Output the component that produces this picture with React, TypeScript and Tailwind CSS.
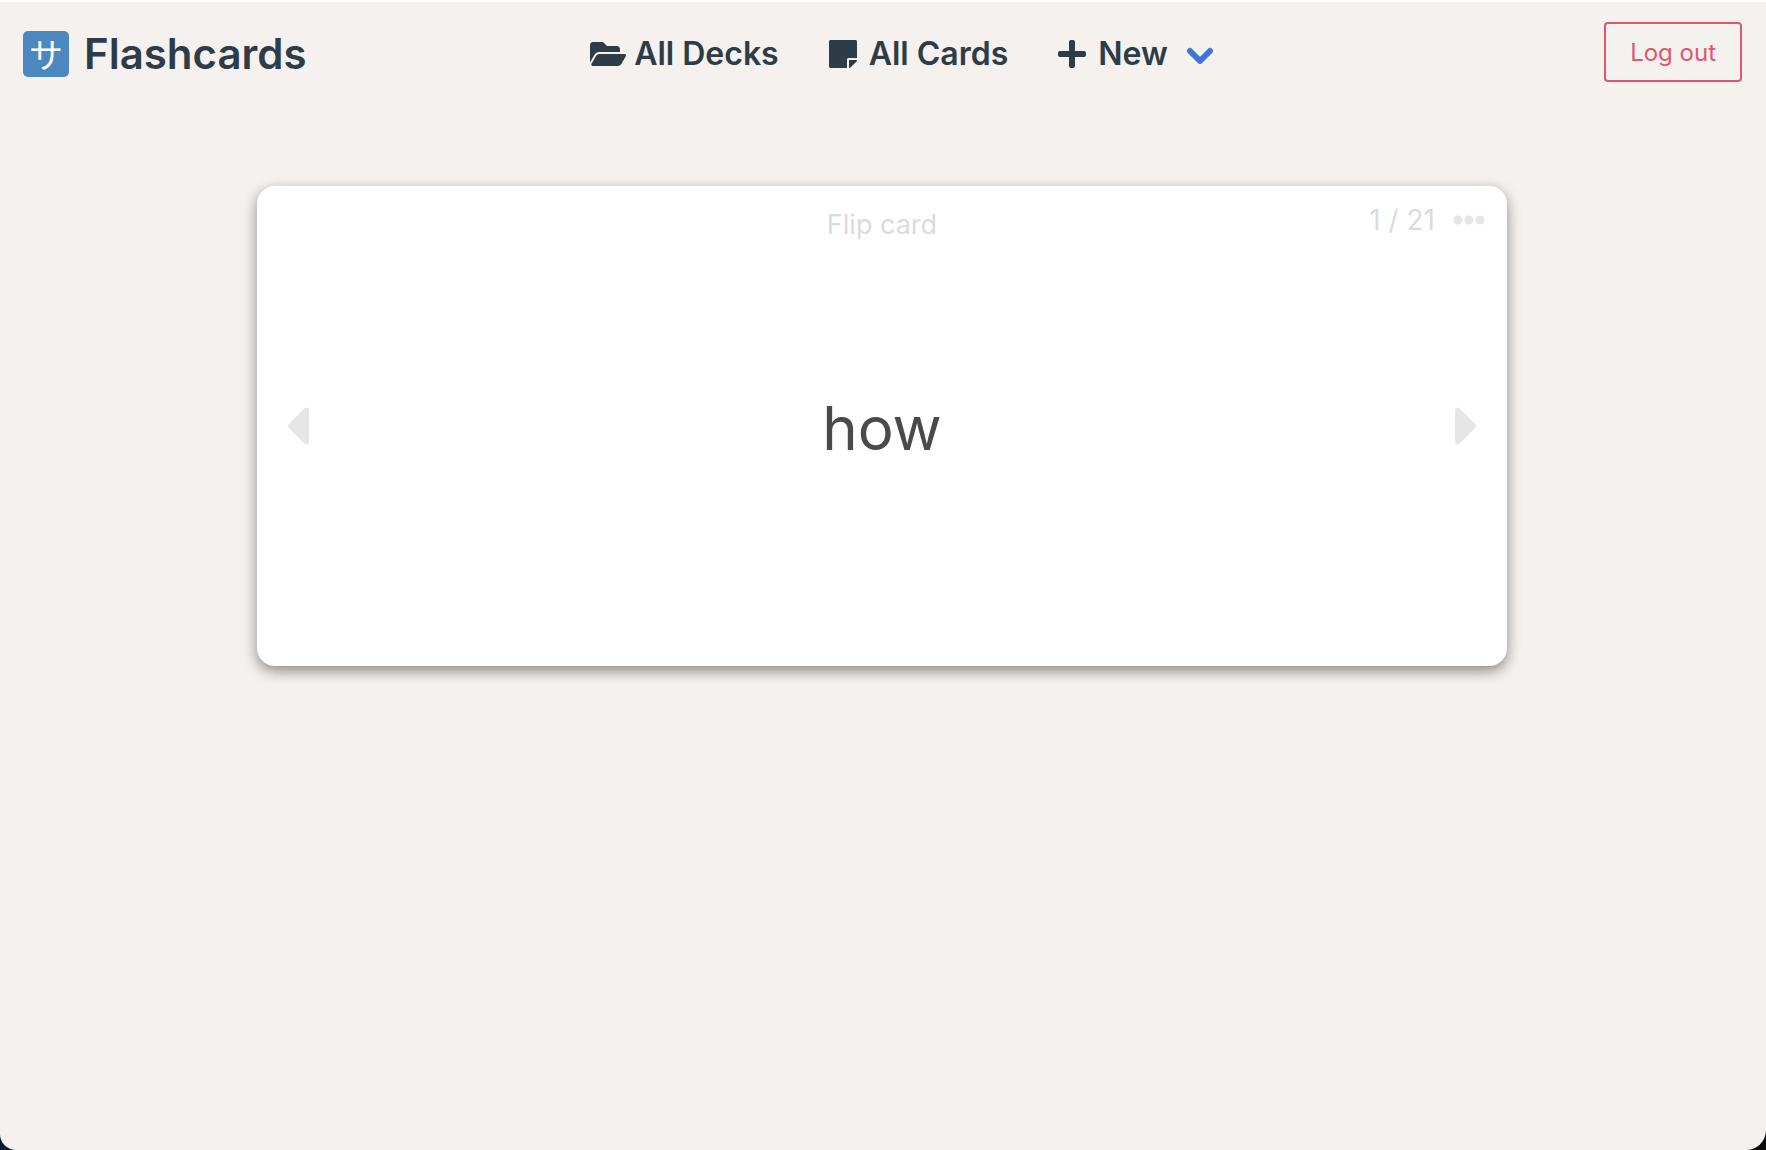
import {
  FaCaretLeft,
  FaCaretRight,
  FaEllipsisH,
  FaFolderOpen,
  FaPlus,
  FaStickyNote,
} from "react-icons/fa";

function Navbar() {
  return (
    <header className="grid grid-cols-[1fr_auto_1fr] items-center px-6 pt-[18px] text-[#2d3c47]">
      <a href="#home" className="-ml-px flex items-center gap-[15px] justify-self-start pt-1">
        <span className="flex size-[46px] items-center justify-center rounded-[5px] bg-[#4d87bf] font-['Noto_Sans_CJK_JP',sans-serif] text-[34px] leading-none text-white">
          サ
        </span>
        <span className="text-[42px] leading-[60px] font-semibold">Flashcards</span>
      </a>
      <nav className="flex items-center gap-[50px] pt-1 pl-[38px] text-[32px] leading-[60px] font-semibold">
        <a href="#decks" className="flex items-center gap-2">
          <FaFolderOpen className="h-8 w-9" />
          All Decks
        </a>
        <a href="#cards" className="flex items-center gap-3">
          <FaStickyNote className="h-8 w-7" />
          All Cards
        </a>
        <button type="button" className="flex items-center gap-3">
          <FaPlus className="h-8 w-7" />
          New
          <svg viewBox="0 0 28 20" className="mt-1 ml-1.5 h-5 w-7" aria-hidden="true">
            <path
              d="M4 5 14 15 24 5"
              fill="none"
              stroke="#3f74d9"
              strokeWidth="6"
              strokeLinecap="round"
              strokeLinejoin="round"
            />
          </svg>
        </button>
      </nav>
      <button
        type="button"
        className="h-[60px] justify-self-end rounded-[4px] border-2 border-[#e0566f] px-6 pt-0.5 text-2xl text-[#e0566f]"
      >
        Log out
      </button>
    </header>
  );
}

function Flashcard() {
  return (
    <article className="mx-auto grid h-[480px] w-full max-w-[1250px] grid-cols-[1fr_auto_1fr] grid-rows-[76px_1fr_76px] items-center rounded-[18px] bg-white px-7 shadow-[0_5px_14px_rgba(10,10,10,0.45)]">
      <button type="button" className="col-start-2 pt-0.5 text-[27px] leading-10 text-[#dbdbdb]">
        Flip card
      </button>
      <div className="-mr-1.5 flex items-center gap-[18px] justify-self-end pb-2 text-[28px] leading-10 text-[#dbdbdb]">
        <span>1 / 21</span>
        <button type="button" aria-label="Card options">
          <FaEllipsisH className="size-8 text-[#e5e5e5]" />
        </button>
      </div>
      <button
        type="button"
        aria-label="Previous card"
        className="col-start-1 row-start-2 justify-self-start text-[#e5e5e5]"
      >
        <FaCaretLeft className="h-16 w-6" />
      </button>
      <p className="row-start-2 pt-1 text-center text-[60px] leading-[72px] text-[#4a4a4a]">how</p>
      <button
        type="button"
        aria-label="Next card"
        className="row-start-2 justify-self-end text-[#e5e5e5]"
      >
        <FaCaretRight className="h-16 w-6" />
      </button>
    </article>
  );
}

export default function App() {
  return (
    <div className="bg-linear-to-r from-[#001c30] to-[#0c0c0c]">
      <div className="min-h-screen rounded-br-[20px] rounded-bl-[16px] border-t-2 border-white bg-[#f5f1ee] font-['Inter',sans-serif]">
        <Navbar />
        <main className="pt-[102px] pr-[26px] pb-10 pl-6">
          <Flashcard />
        </main>
      </div>
    </div>
  );
}
